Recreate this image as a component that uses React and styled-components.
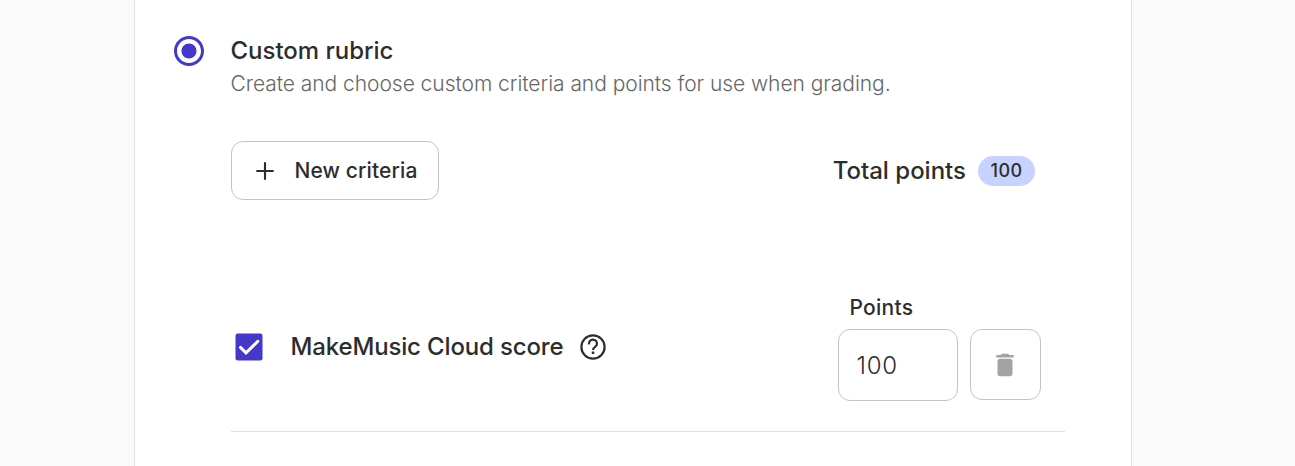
import React from 'react';
import styled, { createGlobalStyle } from 'styled-components';
import { MdRadioButtonChecked } from 'react-icons/md';

const GlobalStyle = createGlobalStyle`
  * {
    box-sizing: border-box;
  }

  body {
    margin: 0;
    background: #fafafa;
    color: #2d2d2d;
    font-family: 'Inter', sans-serif;
  }
`;

const Page = styled.div`
  display: flex;
  height: 466px;
  padding-left: 134px;
  overflow: hidden;
`;

const Panel = styled.main`
  width: 998px;
  padding: 33px 66px 0 36px;
  background: #fff;
  border-left: 1px solid #e0e0e0;
  border-right: 1px solid #e0e0e0;
`;

const Option = styled.label`
  display: flex;
  height: 68px;
`;

const RadioIcon = styled(MdRadioButtonChecked)`
  width: 36px;
  height: 36px;
  margin-right: 23.5px;
  color: #4338ca;
`;

const Label = styled.span`
  display: block;
  font-size: ${props => props.$size || 24}px;
  line-height: 36px;
  font-weight: 500;
  letter-spacing: ${props => props.$spacing || 0}px;
  white-space: nowrap;
`;

const Description = styled.span`
  display: block;
  color: #666;
  font-size: 21px;
  line-height: 30px;
  font-weight: 300;
  letter-spacing: -0.045px;
  white-space: nowrap;
`;

const Content = styled.section`
  margin-left: 60px;
`;

const Toolbar = styled.div`
  display: flex;
  align-items: center;
  justify-content: space-between;
  height: 59px;
  margin-top: 40px;
  padding-right: 30px;
`;

const Button = styled.button`
  display: flex;
  align-items: center;
  justify-content: center;
  width: ${props => props.$width}px;
  height: ${props => props.$height}px;
  padding: 0;
  background: #fff;
  border: 1px solid #c4c4c4;
  border-radius: 12px;
  color: inherit;
  font-family: inherit;
`;

const NewButton = styled(Button)`
  justify-content: flex-start;
  padding-left: 17.5px;
`;

const Icon = styled.svg`
  width: 30px;
  height: 30px;
  margin-right: ${props => props.$gap || 0}px;
  fill: currentColor;
`;

const Total = styled.div`
  display: flex;
  align-items: center;
  gap: 12px;
`;

const Badge = styled.span`
  width: 57px;
  height: 30px;
  background: #c7d2fe;
  border-radius: 15px;
  font-size: 18px;
  line-height: 30px;
  font-weight: 500;
  letter-spacing: 0.4px;
  text-align: center;
`;

const CriteriaRow = styled.div`
  display: flex;
  height: 139px;
  margin-top: 93px;
  border-bottom: 1px solid #e0e0e0;
`;

const Criteria = styled.div`
  display: flex;
  align-items: center;
  width: 607px;
  height: 36px;
  margin-top: 36px;
`;

const CheckIcon = styled.svg`
  width: 36px;
  height: 36px;
  margin: 0 24px 0 -0.5px;
`;

const HelpIcon = styled.svg`
  width: 30px;
  height: 30px;
  margin-left: 15px;
  fill: none;
  stroke: currentColor;
  stroke-width: 2.2;
`;

const PointsField = styled.label`
  width: 120px;
  margin-right: 12px;
`;

const PointsLabel = styled(Label)`
  height: 36px;
  padding-left: 11.5px;
  line-height: 30px;
`;

const Input = styled.input`
  display: block;
  width: 120px;
  height: 72px;
  padding: 0 17.5px;
  background: #fff;
  border: 1px solid #c4c4c4;
  border-radius: 12px;
  color: inherit;
  font-family: inherit;
  font-size: 24px;
  font-weight: 300;
  letter-spacing: 0.8px;
  outline: none;
`;

const DeleteButton = styled(Button)`
  margin-top: 36px;
  padding-right: 1px;
  color: #a3a3a3;
`;

export default function App() {
    return (
        <>
            <GlobalStyle />
            <Page>
                <Panel>
                    <Option>
                        <RadioIcon />
                        <div>
                            <Label $spacing={-0.02}>Custom rubric</Label>
                            <Description>Create and choose custom criteria and points for use when grading.</Description>
                        </div>
                    </Option>
                    <Content>
                        <Toolbar>
                            <NewButton type="button" $width={208} $height={59}>
                                <Icon viewBox="0 0 24 24" $gap={15}>
                                    <path d="M12 5.700v12.600M5.700 12h12.600" stroke="currentColor" strokeWidth="1.700" strokeLinecap="round" />
                                </Icon>
                                <Label $size={21} $spacing={0.12}>New criteria</Label>
                            </NewButton>
                            <Total>
                                <Label>Total points</Label>
                                <Badge>100</Badge>
                            </Total>
                        </Toolbar>
                        <CriteriaRow>
                            <Criteria>
                                <CheckIcon viewBox="0 0 24 24">
                                    <rect x="3" y="3" width="18" height="18" rx="1.5" fill="#4338ca" />
                                    <path d="M6.300 12.300L10 15.900l7.900-7.700" fill="none" stroke="#fff" strokeWidth="2" strokeLinecap="round" />
                                </CheckIcon>
                                <Label $spacing={-0.15}>MakeMusic Cloud score</Label>
                                <HelpIcon viewBox="0 0 30 30">
                                    <circle cx="15" cy="15" r="11.6" />
                                    <path d="M11 12.300a4 4 0 1 1 7.900 0c0 2.600-3.900 2.700-3.900 5.700" />
                                    <path d="M15 19.500v2.500" strokeWidth="2.500" />
                                </HelpIcon>
                            </Criteria>
                            <PointsField>
                                <PointsLabel $size={21} $spacing={0.25}>Points</PointsLabel>
                                <Input type="text" defaultValue="100" />
                            </PointsField>
                            <DeleteButton type="button" aria-label="Delete" $width={71} $height={71}>
                                <Icon viewBox="0 0 24 24">
                                    <path d="M6 19c0 1.1.9 2 2 2h8c1.1 0 2-.9 2-2V9c0-1.1-.9-2-2-2H8c-1.1 0-2 .9-2 2v10zM19 4h-3.5l-1-1h-5l-1 1H5v2h14V4z" />
                                </Icon>
                            </DeleteButton>
                        </CriteriaRow>
                    </Content>
                </Panel>
            </Page>
        </>
    );
}
